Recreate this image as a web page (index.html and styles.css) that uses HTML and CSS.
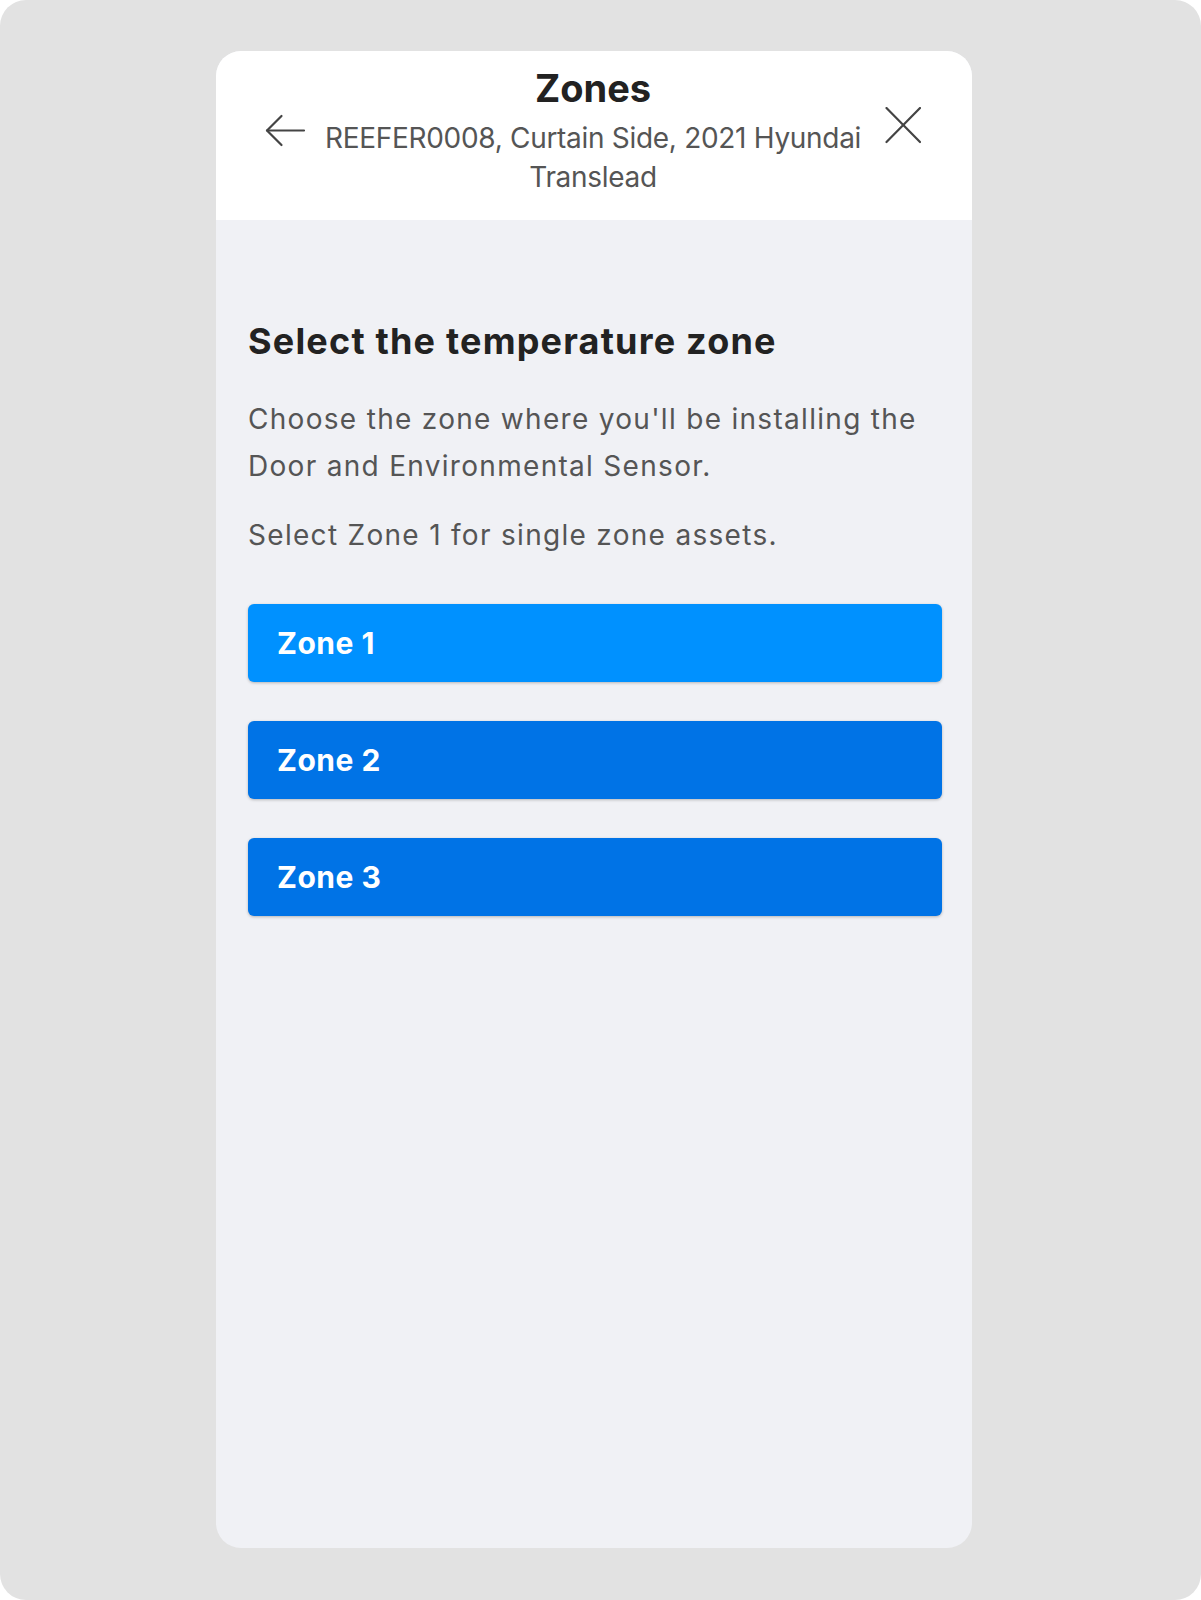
FILE: index.html
```html
<!DOCTYPE html>
<html lang="en">
<head>
<meta charset="utf-8">
<title>Zones</title>
<link rel="stylesheet" href="styles.css">
</head>
<body>
<div class="screen">
  <div class="card">
    <header class="header">
      <button class="icon-btn back" aria-label="Back">
        <svg width="44" height="44" viewBox="0 0 44 44" fill="none" stroke="#444" stroke-width="2.2" stroke-linecap="round" stroke-linejoin="round">
          <path d="M39 20.5H2"/>
          <path d="M16.5 6L2 20.5L16.5 35"/>
        </svg>
      </button>
      <div class="titles">
        <h1 class="title">Zones</h1>
        <p class="subtitle">REEFER0008, Curtain Side, 2021 Hyundai Translead</p>
      </div>
      <button class="icon-btn close" aria-label="Close">
        <svg width="44" height="44" viewBox="0 0 44 44" fill="none" stroke="#444" stroke-width="2.2" stroke-linecap="round">
          <path d="M9.5 1L43 35"/>
          <path d="M43 1L9.5 35"/>
        </svg>
      </button>
    </header>
    <main class="content">
      <h2 class="heading">Select the temperature zone</h2>
      <p class="text">Choose the zone where you'll be installing the Door and Environmental Sensor.</p>
      <p class="text second">Select Zone 1 for single zone assets.</p>
      <div class="zones">
        <button class="zone zone-active">Zone 1</button>
        <button class="zone">Zone 2</button>
        <button class="zone">Zone 3</button>
      </div>
    </main>
  </div>
</div>
</body>
</html>
```

FILE: styles.css
```css
html, body {
  margin: 0;
  padding: 0;
  background: #ffffff;
}

body {
  font-family: Inter, "Noto Sans", "Liberation Sans", sans-serif;
}

.screen {
  width: 1201px;
  height: 1600px;
  box-sizing: border-box;
  background: #e2e2e2;
  border-radius: 26px;
  padding: 51px 0 0 216px;
}

.card {
  width: 756px;
  height: 1497px;
  border-radius: 25px;
  overflow: hidden;
  background: #f0f1f5;
  display: flex;
  flex-direction: column;
}

.header {
  background: #ffffff;
  display: flex;
  align-items: center;
  padding: 14px 51px 23px 49px;
}

.icon-btn {
  border: 0;
  background: none;
  padding: 0;
  margin: 0;
  width: 44px;
  height: 44px;
  flex: 0 0 44px;
  display: block;
  cursor: pointer;
}

.icon-btn svg {
  display: block;
}

.back {
  margin-top: 2px;
}

.close {
  margin-top: -5px;
}

.titles {
  flex: 1;
  text-align: center;
}

.title {
  margin: 0 0 8px;
  font-size: 38px;
  line-height: 46px;
  font-weight: 700;
  color: #222222;
}

.subtitle {
  margin: 0;
  font-size: 28px;
  line-height: 39px;
  font-weight: 400;
  letter-spacing: -0.3px;
  color: #555555;
}

.content {
  padding: 99px 30px 0 32px;
}

.heading {
  margin: 0 0 33px;
  font-size: 36px;
  line-height: 44px;
  font-weight: 700;
  letter-spacing: 1.2px;
  color: #222222;
}

.text {
  margin: 0;
  font-size: 28px;
  line-height: 46.5px;
  letter-spacing: 1.3px;
  color: #555555;
}

.text.second {
  margin-top: 23px;
}

.zones {
  margin-top: 45px;
  display: flex;
  flex-direction: column;
  gap: 39px;
}

.zone {
  display: flex;
  align-items: center;
  height: 78px;
  padding: 0 29px;
  border: 0;
  border-radius: 6px;
  background: #0073e6;
  color: #ffffff;
  font-family: Inter, "Noto Sans", "Liberation Sans", sans-serif;
  font-size: 30px;
  font-weight: 700;
  letter-spacing: 0.5px;
  text-align: left;
  box-shadow: 0 1px 3px rgba(0, 0, 0, 0.25);
  cursor: pointer;
}

.zone-active {
  background: #0091ff;
}
```
